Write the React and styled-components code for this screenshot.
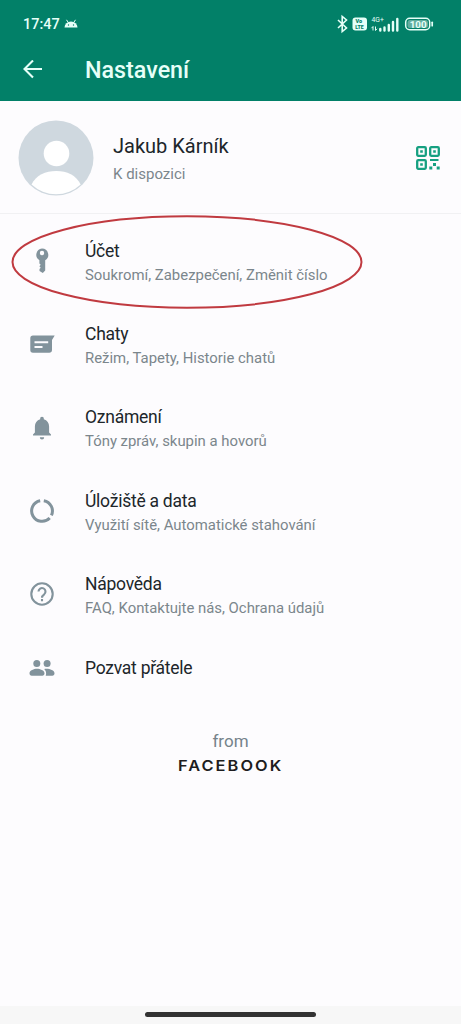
import React from 'react';
import styled, { createGlobalStyle } from 'styled-components';

const GlobalStyle = createGlobalStyle`
  * {
    box-sizing: border-box;
  }
  body {
    margin: 0;
    background: #fdfcfe;
    font-family: Roboto, 'Liberation Sans', sans-serif;
  }
  svg {
    display: block;
    flex: none;
  }
`;

const Screen = styled.div`
  display: flex;
  flex-direction: column;
  width: 461px;
  height: 1024px;
  overflow: hidden;
  background: #fdfcfe;
`;

const Header = styled.header`
  height: 101px;
  flex: none;
  background: #028068;
  color: #e6fff8;
`;

const StatusBar = styled.div`
  display: flex;
  align-items: center;
  justify-content: space-between;
  height: 47px;
  padding: 0 27px 0 23px;
`;

const StatusGroup = styled.div`
  display: flex;
  align-items: center;
  gap: ${props => props.$gap}px;
`;

const Clock = styled.span`
  padding-top: 1px;
  font-size: 14.5px;
  font-weight: 500;
`;

const Toolbar = styled.div`
  display: flex;
  align-items: center;
  height: 45px;
  padding-left: 23px;
`;

const Title = styled.h1`
  margin: 0 0 0 42px;
  font-size: 23.3px;
  font-weight: 500;
  line-height: 30px;
`;

const Profile = styled.section`
  display: flex;
  align-items: center;
  height: 113px;
  flex: none;
  padding: 1px 21px 0 18px;
  border-bottom: 1px solid #f1f1f3;
`;

const ProfileText = styled.div`
  flex: 1;
  margin-left: 19px;
  padding-top: 3px;
`;

const Name = styled.div`
  font-size: 20px;
  line-height: 26px;
  color: #20262a;
`;

const Status = styled.div`
  margin-top: 3px;
  font-size: 15px;
  line-height: 24px;
  color: #7b868c;
`;

const List = styled.main`
  padding-top: 5px;
`;

const Item = styled.div`
  display: flex;
  align-items: center;
  position: relative;
  height: ${props => props.$height || 83.3}px;
`;

const ItemIcon = styled.div`
  display: flex;
  justify-content: center;
  width: 84px;
  margin-right: 1px;
  padding-top: 1px;
  flex: none;
  color: #82939c;
`;

const ItemText = styled.div`
  padding-top: ${props => (props.$single ? 1 : 4)}px;
`;

const ItemTitle = styled.div`
  font-size: 17.5px;
  line-height: 24px;
  letter-spacing: -0.25px;
  color: #20262a;
`;

const ItemDetail = styled.div`
  font-size: 14.9px;
  line-height: 24px;
  color: #7b868c;
`;

const Highlight = styled.svg`
  position: absolute;
  left: 11px;
  top: -4px;
`;

const Footer = styled.footer`
  display: flex;
  flex-direction: column;
  align-items: center;
  margin-top: 30px;
`;

const From = styled.div`
  font-size: 17px;
  line-height: 22px;
  color: #75838b;
`;

const Brand = styled.div`
  margin-top: 4px;
  font-family: Inter, sans-serif;
  font-size: 14.5px;
  font-weight: 600;
  line-height: 20px;
  letter-spacing: 1.8px;
  padding-left: 1px;
  transform: scaleX(1.13);
  color: #1d1d20;
`;

const NavBar = styled.div`
  display: flex;
  justify-content: center;
  height: 18px;
  flex: none;
  margin-top: auto;
  padding-top: 6px;
  background: #f7f7f7;
`;

const NavHandle = styled.div`
  width: 171px;
  height: 5px;
  border-radius: 3px;
  background: #333;
`;

const AndroidHead = () => (
  <svg width="14" height="9" viewBox="0 0 14 9">
    <path d="M.5 8.5a6.5 6.1 0 0 1 13 0z" fill="currentColor" />
    <path d="M2.5.8l1.800 2.800M11.500.8L9.700 3.600" stroke="currentColor" strokeWidth="1" />
    <circle cx="4.500" cy="6" r=".7" fill="#028068" />
    <circle cx="9.500" cy="6" r=".7" fill="#028068" />
  </svg>
);

const StatusIcons = () => (
  <svg width="99" height="20" viewBox="0 0 99 20" fill="none">
    <path d="M3 6l8.500 8L7.200 17.500V2.500L11.500 6 3 14" stroke="currentColor" strokeWidth="1.600" />
    <rect x="17.500" y="3.500" width="14.500" height="13" rx="3" fill="currentColor" />
    <g fill="#028068" fontFamily="Roboto" fontWeight="900">
      <text x="20.500" y="9" fontSize="5.500">Vo</text>
      <text x="20.300" y="15.300" fontSize="5.200">LTE</text>
    </g>
    <text x="36.500" y="7.800" fontSize="6.800" fill="currentColor" fontFamily="Roboto">4G+</text>
    <path d="M38 16.500v-4l-1.500 1.700M40.500 12.500v4l1.500-1.700" stroke="currentColor" strokeWidth="1" />
    <path
      d="M45.300 16.500v-1.500M49.500 16.500v-3M53.800 16.500v-5.500M58 16.500V8M62.300 16.500V5"
      stroke="currentColor"
      strokeWidth="2.400"
      strokeLinecap="round"
    />
    <rect x="70.700" y="4.300" width="24" height="11.400" rx="4" stroke="currentColor" strokeWidth="1.500" />
    <rect x="72.500" y="6" width="20.500" height="8" rx="2.500" fill="#62ad9f" />
    <path d="M97.200 8.300v3.400" stroke="currentColor" strokeWidth="1.700" strokeLinecap="round" />
    <text x="74.700" y="13.700" fontSize="9.800" fontWeight="700" fill="currentColor" fontFamily="Roboto">100</text>
  </svg>
);

const BackArrow = () => (
  <svg width="20" height="20" viewBox="0 0 20 20" fill="none" stroke="currentColor" strokeWidth="2.100">
    <path d="M19 9H2M10 .500L1.500 9l8.500 8.500" />
  </svg>
);

const Avatar = () => (
  <svg width="76" height="76" viewBox="0 0 76 76">
    <circle cx="38" cy="38" r="37.500" fill="#cfd8df" />
    <circle cx="38.500" cy="33.500" r="12.800" fill="#fff" />
    <path d="M13.500 64.500C18 55 27.500 51 38.300 51S58 55 62.700 64.500A36 36 0 0 1 13.500 64.500z" fill="#fff" />
  </svg>
);

const QrIcon = () => (
  <svg width="24" height="24" viewBox="0 0 24 24">
    <g fill="none" stroke="#16a081" strokeWidth="2.300">
      <rect x="1.200" y="1.200" width="8.600" height="8.600" rx="1" />
      <rect x="14.200" y="1.200" width="8.600" height="8.600" rx="1" />
      <rect x="1.200" y="14.200" width="8.600" height="8.600" rx="1" />
    </g>
    <path
      d="M4.200 4.200h2.600v2.600H4.200zM17.200 4.200h2.600v2.600h-2.600zM4.200 17.200h2.600v2.600H4.200zM14 13h8.500v2H14zM17 17h3v3h-3zM13.300 20.500h3V23.500h-3zM20.700 20.500h3V23.500h-3z"
      fill="#16a081"
    />
  </svg>
);

const KeyIcon = () => (
  <svg width="14" height="26" viewBox="0 0 14 26">
    <path
      fill="currentColor"
      fillRule="evenodd"
      d="M7 .5a6.300 6.300 0 0 1 3.200 11.700V22.500L7.800 25 4.500 23l0-2 1.200-1.300-1.300-1.400 1.300-1.500-1.300-1.400V12.200A6.300 6.300 0 0 1 7 .5zm0 2.300a2.200 2.200 0 1 0 0 4.400 2.200 2.200 0 0 0 0-4.400z"
    />
  </svg>
);

const ChatIcon = () => (
  <svg width="25" height="18" viewBox="0 0 25 18">
    <path d="M3 .500h21.700L22 5v10a2.800 2.800 0 0 1-2.800 2.700H3A2.700 2.700 0 0 1 .300 15V3.200A2.700 2.700 0 0 1 3 .500z" fill="currentColor" />
    <path d="M4.500 7.300h13.700M4.500 12h8" stroke="#fdfcfe" strokeWidth="1.900" />
  </svg>
);

const BellIcon = () => (
  <svg width="18" height="24" viewBox="0 0 18 24">
    <path
      d="M9 .800c1.100 0 1.800.8 1.800 1.700v.8c3.400.9 5.300 3.700 5.300 7.200v6l1.900 1.900v1.200H0v-1.200l1.900-1.900v-6c0-3.500 1.900-6.300 5.300-7.200v-.8C7.200 1.600 7.900.8 9 .8zM6.800 21.200h4.400a2.200 2.200 0 0 1-4.400 0z"
      fill="currentColor"
    />
  </svg>
);

const DataIcon = () => (
  <svg width="24" height="24" viewBox="0 0 24 24" fill="none" stroke="currentColor" strokeWidth="3">
    <path d="M13.800 1.700A10.400 10.400 0 0 1 21.400 16.400M19.700 19A10.400 10.400 0 1 1 10.200 1.700" />
  </svg>
);

const HelpIcon = () => (
  <svg width="24" height="24" viewBox="0 0 24 24" fill="none" stroke="currentColor" strokeWidth="2.100">
    <circle cx="12" cy="12" r="10.700" />
    <path d="M8.500 9.600a3.500 3.500 0 1 1 5.700 2.700C12.700 13.400 12 14 12 15.700M12 17v2.200" />
  </svg>
);

const PeopleIcon = () => (
  <svg width="26" height="16" viewBox="0 0 26 16" fill="currentColor">
    <circle cx="7.800" cy="3.600" r="3.500" />
    <circle cx="18.100" cy="3.600" r="3.500" />
    <path d="M.500 13.300c0-3 4.500-4.500 7.500-4.500s7.500 1.500 7.500 4.500c0 1.700-.8 2.400-2.200 2.400H2.700c-1.400 0-2.200-.7-2.200-2.400zM16.700 15.700c.9-2.400.4-5-1.500-6.700 4-.8 10.300.8 10.300 4.300 0 1.700-.8 2.400-2.200 2.400z" />
  </svg>
);

const items = [
  { icon: KeyIcon, title: 'Účet', detail: 'Soukromí, Zabezpečení, Změnit číslo', highlighted: true },
  { icon: ChatIcon, title: 'Chaty', detail: 'Režim, Tapety, Historie chatů' },
  { icon: BellIcon, title: 'Oznámení', detail: 'Tóny zpráv, skupin a hovorů' },
  { icon: DataIcon, title: 'Úložiště a data', detail: 'Využití sítě, Automatické stahování' },
  { icon: HelpIcon, title: 'Nápověda', detail: 'FAQ, Kontaktujte nás, Ochrana údajů' },
  { icon: PeopleIcon, title: 'Pozvat přátele', height: 65 },
];

const App = () => (
  <Screen>
    <GlobalStyle />
    <Header>
      <StatusBar>
        <StatusGroup $gap={4}>
          <Clock>17:47</Clock>
          <AndroidHead />
        </StatusGroup>
        <StatusIcons />
      </StatusBar>
      <Toolbar>
        <BackArrow />
        <Title>Nastavení</Title>
      </Toolbar>
    </Header>
    <Profile>
      <Avatar />
      <ProfileText>
        <Name>Jakub Kárník</Name>
        <Status>K dispozici</Status>
      </ProfileText>
      <QrIcon />
    </Profile>
    <List>
      {items.map(({ icon: Icon, title, detail, height, highlighted }) => (
        <Item key={title} $height={height}>
          <ItemIcon><Icon /></ItemIcon>
          <ItemText $single={!detail}>
            <ItemTitle>{title}</ItemTitle>
            {detail && <ItemDetail>{detail}</ItemDetail>}
          </ItemText>
          {highlighted && (
            <Highlight width="352" height="94" viewBox="0 0 352 94">
              <ellipse cx="176" cy="47" rx="174.500" ry="45.700" fill="none" stroke="#c03a40" strokeWidth="2" />
            </Highlight>
          )}
        </Item>
      ))}
    </List>
    <Footer>
      <From>from</From>
      <Brand>FACEBOOK</Brand>
    </Footer>
    <NavBar>
      <NavHandle />
    </NavBar>
  </Screen>
);

export default App;
